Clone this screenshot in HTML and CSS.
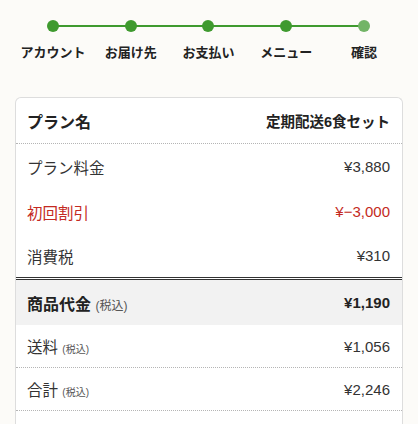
FILE: index.html
```html
<!DOCTYPE html>
<html lang="ja">
<head>
<meta charset="utf-8">
<link rel="stylesheet" href="styles.css">
</head>
<body>
<div class="page">
  <ol class="stepper">
    <li class="step done"><span class="dot"></span><span class="label">アカウント</span></li>
    <li class="step done"><span class="dot"></span><span class="label">お届け先</span></li>
    <li class="step done"><span class="dot"></span><span class="label">お支払い</span></li>
    <li class="step done"><span class="dot"></span><span class="label">メニュー</span></li>
    <li class="step current"><span class="dot"></span><span class="label">確認</span></li>
  </ol>

  <div class="card">
    <div class="row head">
      <span class="name">プラン名</span>
      <span class="plan">定期配送6食セット</span>
    </div>
    <div class="row">
      <span class="jp">プラン料金</span>
      <span class="num">¥3,880</span>
    </div>
    <div class="row discount">
      <span class="jp">初回割引</span>
      <span class="num">¥−3,000</span>
    </div>
    <div class="row tax">
      <span class="jp">消費税</span>
      <span class="num">¥310</span>
    </div>
    <div class="row subtotal">
      <span class="strong">商品代金 <small>(税込)</small></span>
      <span class="num strong">¥1,190</span>
    </div>
    <div class="row dotted">
      <span class="jp">送料 <small>(税込)</small></span>
      <span class="num">¥1,056</span>
    </div>
    <div class="row dotted">
      <span class="jp">合計 <small>(税込)</small></span>
      <span class="num">¥2,246</span>
    </div>
    <div class="row dotted">
      <span></span>
      <span></span>
    </div>
  </div>
</div>
</body>
</html>
```

FILE: styles.css
```css
* { box-sizing: border-box; }

html, body {
  margin: 0;
  padding: 0;
  background: #fcfbf8;
  font-family: "Liberation Sans", "Noto Sans CJK JP", sans-serif;
  color: #333;
}

.page {
  padding: 20px 15px 0 14px;
}

.stepper {
  list-style: none;
  margin: 0;
  padding: 0;
  display: grid;
  grid-template-columns: repeat(5, 1fr);
}

.step {
  position: relative;
  display: flex;
  flex-direction: column;
  align-items: center;
}

.step + .step::before {
  content: "";
  position: absolute;
  top: 5px;
  left: -50%;
  width: 100%;
  height: 2px;
  background: #3f9a2f;
}

.dot {
  position: relative;
  z-index: 1;
  width: 12px;
  height: 12px;
  border-radius: 50%;
  background: #3f9a2f;
}

.step.current .dot {
  background: #72b466;
}

.label {
  margin-top: 13px;
  font-size: 13px;
  font-weight: bold;
  line-height: 16px;
  color: #222;
  white-space: nowrap;
}

.card {
  margin-top: 36px;
  margin-left: 1px;
  background: #fff;
  border: 1px solid #ddd;
  border-bottom: none;
  border-radius: 6px 6px 0 0;
}

.row {
  display: flex;
  justify-content: space-between;
  align-items: center;
  height: 45px;
  padding: 0 12px 0 11px;
  font-size: 15px;
  color: #333;
}

.jp {
  font-size: 15.5px;
}

.row.head {
  height: 46px;
  border-bottom: 1px dotted #b5b5b5;
}

.head .name {
  font-size: 16px;
  font-weight: bold;
  color: #222;
}

.head .plan {
  font-size: 14.5px;
  font-weight: bold;
  color: #222;
}

.num {
  font-size: 15px;
}

.discount {
  color: #c42a22;
}

.row.tax {
  height: 46px;
  border-bottom: 3px double #333;
}

.row.subtotal {
  height: 45px;
  background: #f2f2f2;
}

.strong {
  font-weight: bold;
  font-size: 16px;
  color: #222;
}

.num.strong {
  font-size: 15px;
}

.strong small {
  font-weight: normal;
  font-size: 12px;
  color: #555;
}

small {
  font-size: 10px;
  color: #555;
}

.row.dotted {
  height: 43px;
  border-bottom: 1px dotted #b5b5b5;
}
```
